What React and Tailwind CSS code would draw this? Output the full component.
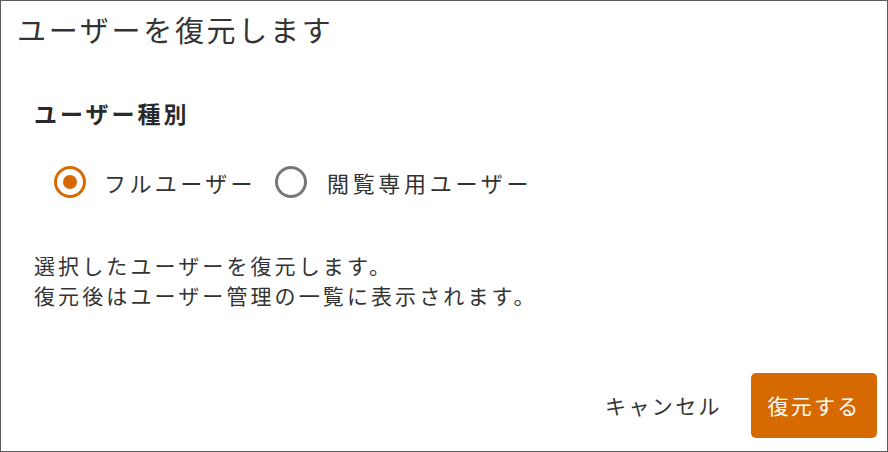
export default function App() {
  return (
    <div
      className="w-[888px] h-[452px] bg-white border border-[#5a5a5a] flex flex-col text-[#333]"
      style={{ fontFamily: '"Noto Sans CJK JP", "Noto Sans", sans-serif' }}
    >
      {/* Title */}
      <h1 className="pl-[16px] pt-[9px] h-[58px] text-[29px] leading-[38px] tracking-[2.7px] font-normal">
        ユーザーを復元します
      </h1>

      <div className="pl-[33px] flex flex-col">
        <h2 className="mt-[38px] text-[23px] leading-[32px] font-bold tracking-[3px] text-[#2a2a2a]">
          ユーザー種別
        </h2>

        <div className="mt-[37px] flex items-center pl-[20px] h-[32px]">
          <label className="flex items-center">
            <span className="w-[32px] h-[32px] rounded-full border-[3px] border-[#d66a00] flex items-center justify-center">
              <span className="w-[14px] h-[14px] rounded-full bg-[#d66a00]" />
            </span>
            <span className="ml-[18px] text-[22px] tracking-[3.4px]">フルユーザー</span>
          </label>
          <label className="flex items-center ml-[19px]">
            <span className="w-[32px] h-[32px] rounded-full border-[3px] border-[#777]" />
            <span className="ml-[20px] text-[22px] tracking-[3.7px]">閲覧専用ユーザー</span>
          </label>
        </div>

        <div className="mt-[52px] text-[21px] leading-[30px] tracking-[3.1px]">
          <p>選択したユーザーを復元します。</p>
          <p>復元後はユーザー管理の一覧に表示されます。</p>
        </div>
      </div>

      <div className="mt-auto mb-[13px] mr-[10px] flex items-center justify-end">
        <button className="text-[21px] tracking-[2.4px] text-[#333] px-[2px] mr-[27px]">
          キャンセル
        </button>
        <button className="w-[126px] h-[65px] rounded-[5px] bg-[#d66a00] text-white text-[21px] tracking-[2.2px]">
          復元する
        </button>
      </div>
    </div>
  );
}
